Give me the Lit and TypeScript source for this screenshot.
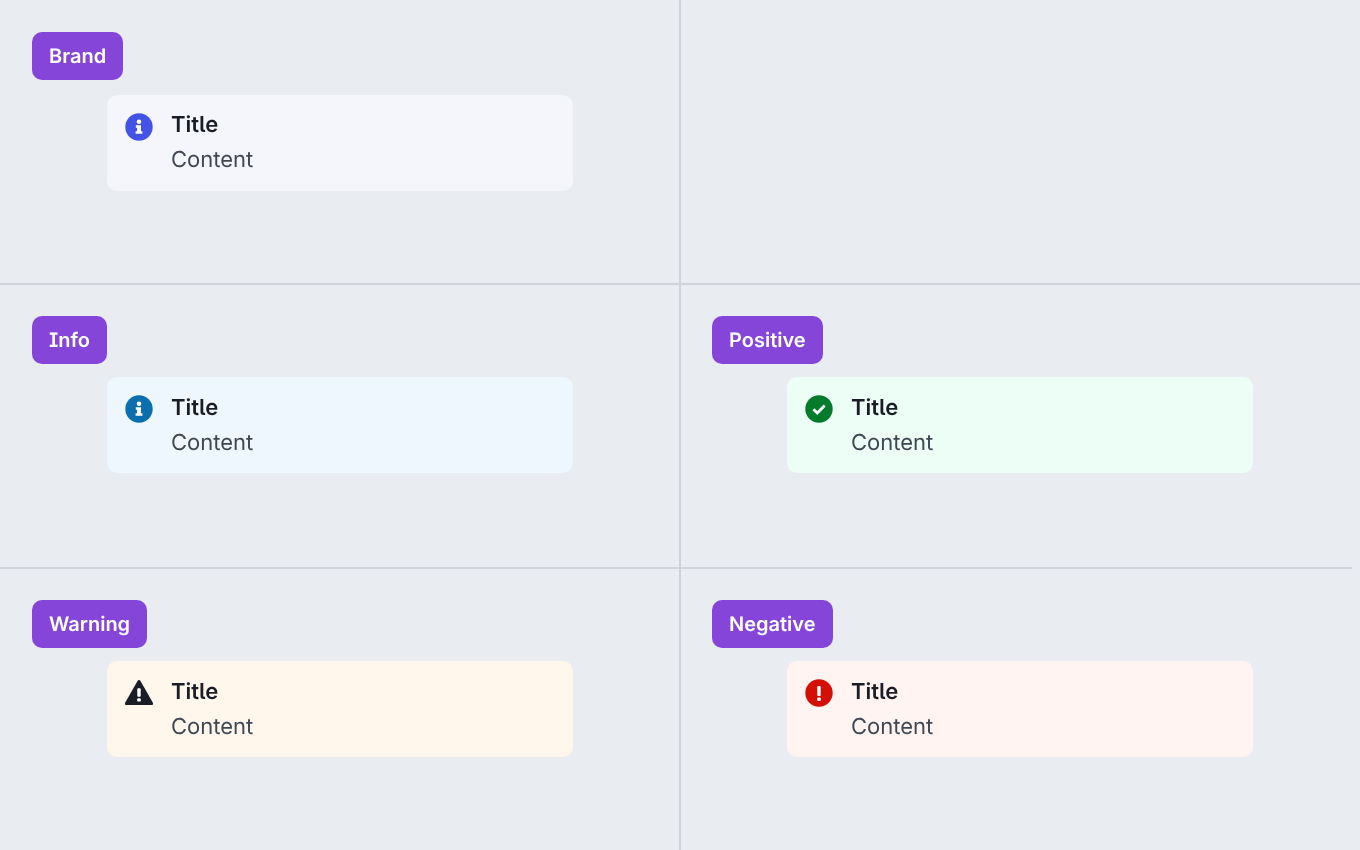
import { LitElement, html, css, svg } from "lit";
import { customElement } from "lit/decorators.js";

type Kind = "brand" | "info" | "positive" | "warning" | "negative";

const infoGlyph = svg`<circle cx="14" cy="8.8" r="2.3" fill="#fff"/><path d="M10.8 12.2h5.2v6h1.4v2.5h-6.8v-2.5h1.5v-3.5h-1.3z" fill="#fff"/>`;

const icons: Record<Kind, unknown> = {
  brand: svg`<circle cx="14" cy="14" r="13.7" fill="#4353e8"/>${infoGlyph}`,
  info: svg`<circle cx="14" cy="14" r="13.7" fill="#0b6fae"/>${infoGlyph}`,
  positive: svg`<circle cx="14" cy="14" r="13.7" fill="#047a2b"/><path d="M8.4 14.3l3.9 3.8 7.4-7.5" fill="none" stroke="#fff" stroke-width="2.8"/>`,
  warning: svg`<path d="M14 1c.7 0 1.2.4 1.5.9l12.6 22.3c.5 1-.1 1.8-1.1 1.8H1c-1 0-1.6-.8-1.1-1.8L12.5 1.9C12.8 1.4 13.3 1 14 1z" fill="#1a1d26"/><rect x="12.3" y="9.2" width="3.4" height="8.6" rx="1" fill="#fff"/><rect x="12.2" y="19.2" width="3.6" height="3.4" rx="1.2" fill="#fff"/>`,
  negative: svg`<circle cx="14" cy="14" r="13.7" fill="#d60f06"/><rect x="12.3" y="7" width="3.4" height="10" rx="1" fill="#fff"/><rect x="12.2" y="18.4" width="3.6" height="3.6" rx="1.2" fill="#fff"/>`,
};

const cells: { label: string; kind: Kind | null }[] = [
  { label: "Brand", kind: "brand" },
  { label: "", kind: null },
  { label: "Info", kind: "info" },
  { label: "Positive", kind: "positive" },
  { label: "Warning", kind: "warning" },
  { label: "Negative", kind: "negative" },
];

@customElement("app-root")
export class AppRoot extends LitElement {
  static styles = css`
    :host {
      display: block;
      width: 1360px;
      height: 850px;
      overflow: hidden;
      background: #e9ecf1;
      font-family: Inter, "Liberation Sans", sans-serif;
      font-feature-settings: "ss02", "cv08";
      text-rendering: geometricPrecision;
    }
    .grid {
      display: grid;
      grid-template-columns: 681px 679px;
      grid-template-rows: 285px 284px 281px;
    }
    .cell {
      box-sizing: border-box;
      padding: 31px 0 0 32px;
      border-right: 2px solid #d0d4da;
    }
    .cell:nth-child(-n + 2) {
      padding-top: 32px;
    }
    .cell:nth-child(2n) {
      border-right: none;
      padding-left: 31px;
    }
    .cell:nth-child(-n + 4) {
      border-bottom: 2px solid #d0d4da;
    }
    .cell:nth-child(4) {
      margin-right: 8px;
    }
    .head {
      height: 48px;
    }
    .label {
      display: inline-block;
      vertical-align: top;
      height: 48px;
      line-height: 48px;
      padding: 0 17px;
      border-radius: 10px;
      background: #8645d9;
      color: #fff;
      font-size: 20px;
      font-weight: 600;
    }
    .alert {
      box-sizing: border-box;
      display: flex;
      gap: 18px;
      width: 466px;
      height: 96px;
      margin: 13px 0 0 74.7px;
      padding: 16px 18px;
      border-radius: 10px;
    }
    .first {
      margin-top: 14.7px;
    }
    .brand { background: #f4f6fb; }
    .info { background: #eff7fe; }
    .positive { background: #edfef6; }
    .warning { background: #fff6ec; }
    .negative { background: #fff4f2; }
    .icon {
      flex: none;
      width: 28px;
      height: 28px;
      margin-top: 2px;
    }
    .copy {
      margin-top: 1px;
      will-change: transform;
    }
    .first .copy {
      margin-top: 0;
    }
    .title {
      color: #1a1d26;
      font-size: 22px;
      font-weight: 600;
      line-height: 28px;
    }
    .content {
      margin-top: 7px;
      color: #414752;
      font-size: 22px;
      font-weight: 400;
      line-height: 28px;
    }
    .label span {
      display: block;
      will-change: transform;
    }
  `;

  render() {
    return html`<div class="grid">
      ${cells.map(
        (c, i) => html`<div class="cell">
          ${c.kind
            ? html`<div class="head"><span class="label"><span>${c.label}</span></span></div>
                <div class="alert ${c.kind} ${i === 0 ? "first" : ""}">
                  <svg class="icon" viewBox="0 0 28 28">${icons[c.kind]}</svg>
                  <div class="copy">
                    <div class="title">Title</div>
                    <div class="content">Content</div>
                  </div>
                </div>`
            : ""}
        </div>`
      )}
    </div>`;
  }
}
